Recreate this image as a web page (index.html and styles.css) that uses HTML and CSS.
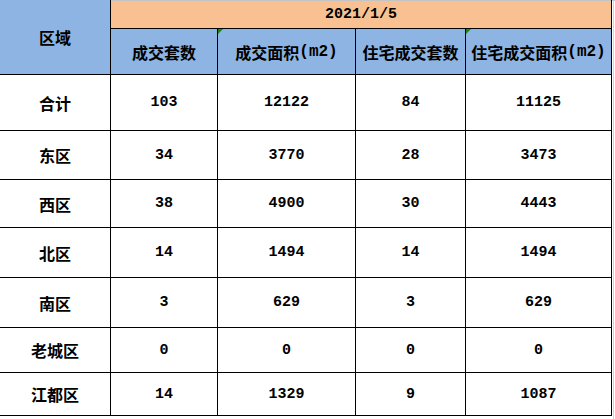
FILE: index.html
```html
<!DOCTYPE html>
<html lang="zh">
<head>
<meta charset="utf-8">
<link rel="stylesheet" href="styles.css">
</head>
<body>
<div class="sheet">
  <div class="grid">
    <div class="cell head region">区域</div>
    <div class="cell date num">2021/1/5</div>
    <div class="cell head">成交套数</div>
    <div class="cell head mark">成交面积<span class="unit">(m2)</span></div>
    <div class="cell head">住宅成交套数</div>
    <div class="cell head mark">住宅成交面积<span class="unit">(m2)</span></div>

    <div class="cell name">合计</div><div class="cell num">103</div><div class="cell num">12122</div><div class="cell num">84</div><div class="cell num">11125</div>
    <div class="cell name">东区</div><div class="cell num">34</div><div class="cell num">3770</div><div class="cell num">28</div><div class="cell num">3473</div>
    <div class="cell name">西区</div><div class="cell num">38</div><div class="cell num">4900</div><div class="cell num">30</div><div class="cell num">4443</div>
    <div class="cell name">北区</div><div class="cell num">14</div><div class="cell num">1494</div><div class="cell num">14</div><div class="cell num">1494</div>
    <div class="cell name">南区</div><div class="cell num">3</div><div class="cell num">629</div><div class="cell num">3</div><div class="cell num">629</div>
    <div class="cell name">老城区</div><div class="cell num">0</div><div class="cell num">0</div><div class="cell num">0</div><div class="cell num">0</div>
    <div class="cell name">江都区</div><div class="cell num">14</div><div class="cell num">1329</div><div class="cell num">9</div><div class="cell num">1087</div>
  </div>
  <div class="filler"></div>
</div>
</body>
</html>
```
FILE: styles.css
```css
html, body {
  margin: 0;
  padding: 0;
  background: #ffffff;
}
body {
  font-family: "Noto Sans CJK SC", "Liberation Sans", sans-serif;
  color: #000;
}
.sheet {
  display: flex;
  align-items: flex-start;
}
.grid {
  display: grid;
  grid-template-columns: 110px 106px 137px 109px 145px;
  grid-template-rows: 28px 45px 55px 48px 47px 49px 49px 44px 42px;
  gap: 1px;
  background: #000;
  padding: 0 1px 1px 0;
}
.filler {
  flex: 1;
  height: 419px;
  border-top: 1px solid #c8c8c8;
  box-sizing: border-box;
  background:
    linear-gradient(#d4d4d4, #d4d4d4) 1px 0 / 1px 100% no-repeat;
}
.cell {
  display: flex;
  align-items: center;
  justify-content: center;
  background: #fff;
  font-size: 16px;
  font-weight: 700;
  white-space: nowrap;
  position: relative;
}
.head {
  background: #8db4e2;
}
.region {
  grid-row: 1 / 3;
}
.date {
  grid-column: 2 / 6;
  background: #f9c191;
  border-top: 1px solid #c4c4c4;
  box-sizing: border-box;
}
.num {
  font-family: "Liberation Mono", monospace;
  font-size: 15px;
  font-weight: 700;
}
.unit {
  font-family: "Liberation Mono", monospace;
  font-size: 16px;
  font-weight: 700;
}
.mark::before {
  content: "";
  position: absolute;
  left: 0;
  top: 0;
  border-top: 5px solid #138a13;
  border-right: 5px solid transparent;
}
```
